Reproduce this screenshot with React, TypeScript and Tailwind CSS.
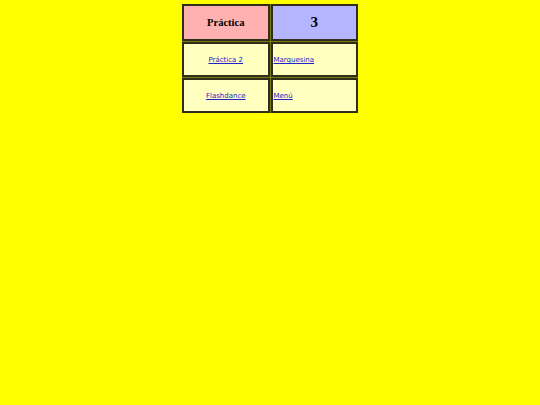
const ROWS = [
  { left: 'Práctica 2', right: 'Marquesina' },
  { left: 'Flashdance', right: 'Menú' },
];

export default function App() {
  return (
    <div className="min-h-[405px] bg-[#ffff00] pt-[4px]">
      <div className="mx-auto grid w-[176px] grid-cols-2 gap-[1px] bg-[#7a7a10]">
        <div className="flex h-[37px] items-center justify-center border-2 border-[#2e2e1a] bg-[#ffb0b0]">
          <span className="font-['Liberation_Serif',serif] text-[10.5px] font-bold text-black">Práctica</span>
        </div>
        <div className="flex h-[37px] items-center justify-center border-2 border-[#2e2e1a] bg-[#b4b4ff]">
          <span className="font-['Liberation_Serif',serif] text-[15px] font-bold text-black">3</span>
        </div>
        {ROWS.map((r) => (
          <>
            <div key={r.left} className="flex h-[35px] items-center justify-center border-2 border-[#2e2e1a] bg-[#ffffc0] pt-[2px]">
              <a href="#" className="font-['DejaVu_Sans',sans-serif] text-[7px] text-[#2222cc] underline">{r.left}</a>
            </div>
            <div key={r.right} className="flex h-[35px] items-center border-2 border-[#2e2e1a] bg-[#ffffc0] pl-[1px] pt-[2px]">
              <a href="#" className="font-['DejaVu_Sans',sans-serif] text-[7px] text-[#2222cc] underline">{r.right}</a>
            </div>
          </>
        ))}
      </div>
    </div>
  );
}
